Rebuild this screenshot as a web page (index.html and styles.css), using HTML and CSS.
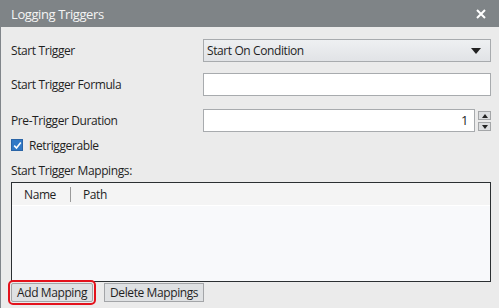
FILE: index.html
```html
<!DOCTYPE html>
<html lang="en">
<head>
    <meta charset="UTF-8">
    <title>Logging Triggers</title>
    <link rel="stylesheet" href="styles.css">
</head>
<body>
    <div class="dialog">
        <div class="titlebar">
            <span class="title">Logging Triggers</span>
            <svg class="close" width="10" height="10" viewBox="0 0 10 10">
                <path d="M1 1 L9 9 M9 1 L1 9" stroke="#ffffff" stroke-width="2"/>
            </svg>
        </div>

        <div class="content">
            <div class="field-row row-trigger">
                <span class="label">Start Trigger</span>
                <div class="select">
                    <span>Start On Condition</span>
                    <span class="arrow"></span>
                </div>
            </div>

            <div class="field-row row-formula">
                <span class="label">Start Trigger Formula</span>
                <div class="textbox"></div>
            </div>

            <div class="field-row row-duration">
                <span class="label">Pre-Trigger Duration</span>
                <div class="spin">
                    <div class="textbox numeric">1</div>
                    <div class="spin-buttons">
                        <div class="spin-btn"><span class="tri-up"></span></div>
                        <div class="spin-btn"><span class="tri-down"></span></div>
                    </div>
                </div>
            </div>

            <label class="check-row">
                <span class="checkbox">
                    <svg width="9" height="9" viewBox="0 0 9 9">
                        <path d="M1.2 4.6 L3.5 7 L7.8 1.5" fill="none" stroke="#ffffff" stroke-width="1.6"/>
                    </svg>
                </span>
                Retriggerable
            </label>

            <div class="section-label">Start Trigger Mappings:</div>

            <div class="grid">
                <div class="grid-header">
                    <span class="col col-name">Name</span>
                    <span class="col col-path">Path</span>
                </div>
                <div class="grid-body"></div>
            </div>

            <div class="actions">
                <button class="btn focused">Add Mapping</button>
                <button class="btn">Delete Mappings</button>
            </div>
        </div>
    </div>
</body>
</html>
```

FILE: styles.css
```css
* {
    margin: 0;
    padding: 0;
    box-sizing: border-box;
}

body {
    font-family: 'Open Sans', 'Noto Sans', sans-serif;
    font-size: 12px;
    letter-spacing: -0.4px;
    color: #1f1f1f;
    background: #ebebeb;
    width: 499px;
    height: 308px;
    overflow: hidden;
}

.dialog {
    width: 499px;
    height: 308px;
    border-left: 1px solid #80858a;
    background: #ebebeb;
}

.titlebar {
    height: 27px;
    background: #7f8487;
    color: #f4f4f4;
    display: flex;
    align-items: center;
    justify-content: space-between;
    padding: 0 13px 0 10px;
    margin-left: -1px;
}

.title {
    font-size: 13px;
    padding-left: 1px;
}

.close {
    display: block;
}

.content {
    padding: 12px 8px 0 10px;
}

.field-row {
    display: grid;
    grid-template-columns: 192px 1fr;
    align-items: center;
    height: 23px;
}

.row-formula {
    margin-top: 11px;
}

.row-duration {
    margin-top: 13px;
}

.select {
    height: 23px;
    border: 1px solid #a8abae;
    background: linear-gradient(#eef0f2, #e1e3e6);
    display: flex;
    align-items: center;
    justify-content: space-between;
    padding: 0 9px 0 3px;
}

.arrow {
    width: 0;
    height: 0;
    border-left: 5px solid transparent;
    border-right: 5px solid transparent;
    border-top: 6px solid #222;
}

.textbox {
    height: 23px;
    border: 1px solid #a8abae;
    background: #ffffff;
}

.spin {
    display: flex;
    align-items: center;
    gap: 3px;
}

.textbox.numeric {
    flex: 1;
    text-align: right;
    padding-right: 6px;
    line-height: 21px;
    font-size: 13px;
}

.spin-buttons {
    display: flex;
    flex-direction: column;
    gap: 2px;
    padding-top: 1px;
}

.spin-btn {
    width: 13px;
    height: 9px;
    border: 1px solid #a4a6a8;
    background: #dcdee0;
    display: flex;
    align-items: center;
    justify-content: center;
}

.tri-up,
.tri-down {
    width: 0;
    height: 0;
    border-left: 3.5px solid transparent;
    border-right: 3.5px solid transparent;
}

.tri-up {
    border-bottom: 4px solid #222;
}

.tri-down {
    border-top: 4px solid #222;
}

.check-row {
    display: flex;
    align-items: center;
    gap: 6px;
    margin-top: 6px;
    height: 14px;
}

.checkbox {
    width: 12px;
    height: 12px;
    background: #3179c6;
    border: 1px solid #2a64a6;
    display: flex;
    align-items: center;
    justify-content: center;
}

.checkbox svg {
    display: block;
}

.section-label {
    margin-top: 9px;
    height: 19px;
    line-height: 19px;
}

.grid {
    margin-top: 2px;
    height: 100px;
    border: 1px solid #2b2f32;
    background: #f8f9fb;
    display: flex;
    flex-direction: column;
}

.grid-header {
    height: 23px;
    background: #f4f4f4;
    border-bottom: 1px solid #ffffff;
    display: flex;
    align-items: center;
}

.col {
    display: flex;
    align-items: center;
}

.col-name {
    width: 59px;
    padding-left: 12px;
    height: 15px;
    border-right: 1px solid #9a9a9a;
}

.col-path {
    padding-left: 12px;
}

.actions {
    display: flex;
    gap: 11px;
    margin-top: 1px;
    padding-left: 0;
}

.btn {
    font-family: inherit;
    font-size: 12px;
    letter-spacing: inherit;
    color: #1f1f1f;
    height: 19px;
    padding: 0 5px;
    border: 1px solid #a3a5a8;
    background: #dfe1e3;
    cursor: pointer;
}

.btn.focused {
    outline: 2px solid #e3121c;
    outline-offset: 1px;
    border-radius: 2px;
}
```
